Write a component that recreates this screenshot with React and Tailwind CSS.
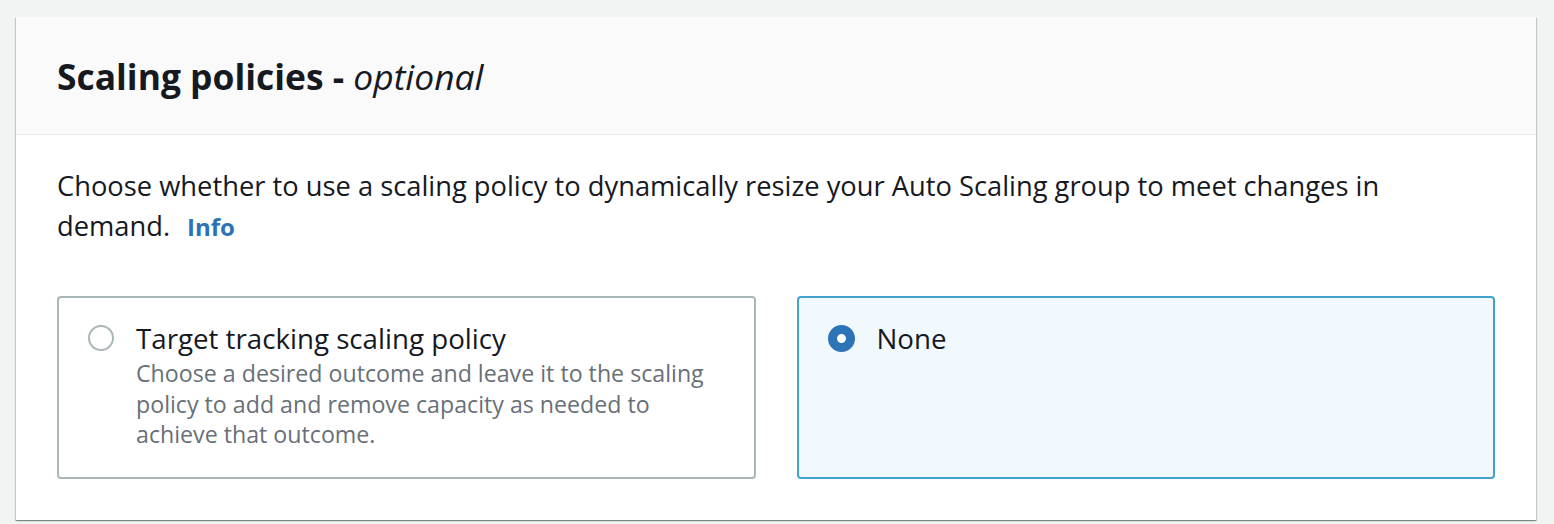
import React from "react";

export default function App() {
  return (
    <div className="min-h-[524px] bg-[#f2f3f3] pt-[17px] pl-[16px] pr-[18px] pb-[4px]" style={{ fontFamily: '"Open Sans", "Noto Sans", sans-serif' }}>
      <div className="bg-white shadow-[0_1px_1px_0_rgba(0,28,36,0.3),1px_1px_1px_0_rgba(0,28,36,0.15),-1px_1px_1px_0_rgba(0,28,36,0.15)]">
        <div className="h-[118px] bg-[#fafafa] border-b border-[#eaeded] flex items-center px-[41px]">
          <h2 className="text-[35.4px] font-bold text-[#16191f] leading-[44px]">
            Scaling policies - <span className="italic font-normal">optional</span>
          </h2>
        </div>
        <div className="px-[41px] pt-[31px] pb-[41px]">
          <p className="text-[27.3px] leading-[40px] text-[#16191f]">
            <span>Choose whether to use a scaling policy to dynamically resize your Auto Scaling group to meet changes in demand.</span>
            <span className="inline-block ml-[17px] text-[24px] font-bold text-[#2b73b6]">Info</span>
          </p>
          <div className="mt-[49px] grid grid-cols-2 gap-[41px]">
            <div className="h-[183px] border-2 border-[#aab7b8] rounded-[4px] pl-[29px] pr-[36px] pt-[24px] flex gap-[22px]">
              <div className="mt-[3px] w-[26px] h-[26px] rounded-full border-2 border-[#aab7b8] bg-white shrink-0" />
              <div>
                <div className="text-[27.7px] leading-[32px] text-[#16191f]">Target tracking scaling policy</div>
                <div className="mt-[4px] text-[23.2px] leading-[30.5px] text-[#687078]">
                  Choose a desired outcome and leave it to the scaling policy to add and remove capacity as needed to achieve that outcome.
                </div>
              </div>
            </div>
            <div className="h-[183px] border-2 border-[#44a3c9] bg-[#f1f8fe] rounded-[4px] pl-[29px] pr-[30px] pt-[24px] flex gap-[22px]">
              <div className="mt-[3px] w-[27px] h-[27px] rounded-full border-[9px] border-[#2d73b8] bg-white shrink-0" />
              <div className="text-[27.7px] leading-[32px] text-[#16191f]">None</div>
            </div>
          </div>
        </div>
      </div>
    </div>
  );
}
